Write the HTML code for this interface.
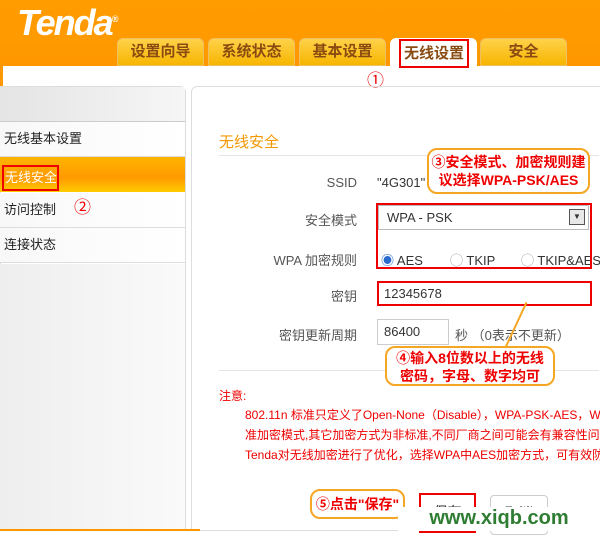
<!DOCTYPE html>
<html><head><meta charset="utf-8"><style>
*{margin:0;padding:0;box-sizing:border-box}
body{width:600px;height:531px;overflow:hidden;position:relative;background:#fff;font-family:"Liberation Sans","Noto Sans CJK SC",sans-serif;font-size:12px;color:#333}
.a{position:absolute}
.hdr{left:0;top:0;width:600px;height:66px;background:linear-gradient(#ff9c00,#ff9800)}
.logo{left:17px;top:3px;font:italic bold 36px/32px "Liberation Sans",sans-serif;color:#fff;letter-spacing:-2px}
.tab{top:38px;height:28px;width:87px;background:linear-gradient(#ffd24a,#f7b500);border-radius:6px 6px 0 0;border:1px solid #f0c060;color:#8a4b12;font-size:15px;text-align:center;line-height:26px;font-weight:bold}
.side{left:0;top:86px;width:186px;height:445px;border:1px solid #ddd;border-radius:0 6px 0 0;background:#fff}
.it{left:0;width:185px;height:35px;border-bottom:1px solid #ddd;font-size:13px;color:#222;line-height:34px;padding-left:4px;background:linear-gradient(90deg,#f8f8f8,#fff)}
.lbl{width:160px;text-align:right;left:197px;font-size:13px;color:#555}
.red{color:#e00;font-size:12px}
.call{border:2px solid #f5a623;border-radius:10px;background:#fff;color:#e00;font-weight:bold;font-size:14px;text-align:center;line-height:18px;white-space:nowrap}
.rb{border:2px solid #e00}
</style></head><body>
<div class="a hdr"></div>
<div class="a logo">Tenda<sup style="font-size:9px">®</sup></div>
<div class="a tab" style="left:117px">设置向导</div>
<div class="a tab" style="left:208px">系统状态</div>
<div class="a tab" style="left:299px">基本设置</div>
<div class="a tab" style="left:390px;background:#fff;border-color:#fff"></div>
<div class="a rb" style="left:399px;top:39px;width:70px;height:29px;color:#8a4b12;font-size:15px;text-align:center;line-height:25px;font-weight:bold">无线设置</div>
<div class="a tab" style="left:480px">安全</div>
<div class="a" style="left:0;top:66px;width:3px;height:465px;background:#ff9800"></div>
<div class="a side"></div>
<div class="a" style="left:0;top:87px;width:185px;height:35px;background:linear-gradient(90deg,#e4e4e4,#f6f6f6);border-bottom:1px solid #ccc"></div>
<div class="a it" style="top:122px">无线基本设置</div>
<div class="a it" style="top:157px;background:linear-gradient(#ffb400,#ff9a00 60%,#ffcc00);color:#fff;border:0"></div>
<div class="a rb" style="left:2px;top:165px;width:57px;height:26px;color:#fff;font-size:13px;line-height:22px;padding-left:1px">无线安全</div>
<div class="a it" style="top:193px">访问控制</div>
<div class="a it" style="top:228px">连接状态</div>
<div class="a" style="left:0;top:264px;width:185px;height:266px;background:linear-gradient(90deg,#eee,#fafafa)"></div>
<div class="a" style="left:74px;top:193px;color:#e00;font-size:17px">②</div>
<div class="a" style="left:367px;top:66px;color:#e00;font-size:17px">①</div>
<div class="a" style="left:191px;top:86px;width:420px;height:445px;border:1px solid #ddd;border-radius:6px 0 0 0"></div>
<div class="a" style="left:219px;top:131px;color:#f39800;font-size:15px">无线安全</div>
<div class="a" style="left:219px;top:155px;width:380px;height:1px;background:#e5e5e5"></div>
<div class="a lbl" style="top:175px">SSID</div>
<div class="a" style="left:377px;top:175px;font-size:13px">"4G301"</div>
<div class="a lbl" style="top:210px">安全模式</div>
<div class="a" style="left:378px;top:205px;width:211px;height:25px;border:1px solid #bbb;font-size:13px;padding:4px 8px">WPA - PSK
<div class="a" style="right:3px;top:3px;width:16px;height:16px;border:1px solid #555;background:#e8e8e8;font-size:8px;text-align:center;line-height:14px">▼</div></div>
<div class="a lbl" style="top:250px">WPA 加密规则</div>
<div class="a" style="left:381px;top:250px;font-size:13px;white-space:nowrap"><span style="color:#2a6ccc">◉</span> AES</div>
<div class="a" style="left:450px;top:250px;font-size:13px;white-space:nowrap"><span style="color:#999">◯</span> TKIP</div>
<div class="a" style="left:521px;top:250px;font-size:13px;white-space:nowrap"><span style="color:#999">◯</span> TKIP&amp;AES</div>
<div class="a rb" style="left:376px;top:203px;width:216px;height:66px"></div>
<div class="a lbl" style="top:286px">密钥</div>
<div class="a rb" style="left:377px;top:281px;width:215px;height:25px;font-size:13px;padding:3px 5px">12345678</div>
<div class="a lbl" style="top:325px">密钥更新周期</div>
<div class="a" style="left:377px;top:319px;width:72px;height:26px;border:1px solid #ccc;font-size:13px;padding:4px 6px">86400</div>
<div class="a" style="left:455px;top:325px;font-size:13px;color:#555">秒 （0表示不更新）</div>
<div class="a" style="left:219px;top:370px;width:380px;height:1px;background:#e5e5e5"></div>
<div class="a red" style="left:219px;top:387px">注意:</div>
<div class="a red" style="left:245px;top:406px;white-space:nowrap">802.11n 标准只定义了Open-None（Disable），WPA-PSK-AES，WPA</div>
<div class="a red" style="left:245px;top:426px;white-space:nowrap">准加密模式,其它加密方式为非标准,不同厂商之间可能会有兼容性问题</div>
<div class="a red" style="left:245px;top:446px;white-space:nowrap">Tenda对无线加密进行了优化，选择WPA中AES加密方式，可有效防</div>
<div class="a call" style="left:427px;top:148px;width:163px;height:46px;padding-top:3px">③安全模式、加密规则建<br>议选择WPA-PSK/AES</div>
<div class="a" style="left:515px;top:300px;width:2px;height:50px;background:#f5a623;transform:rotate(25deg)"></div>
<div class="a call" style="left:385px;top:346px;width:170px;height:40px;padding-top:1px">④输入8位数以上的无线<br>密码，字母、数字均可</div>
<div class="a rb" style="left:419px;top:493px;width:57px;height:40px;font-size:14px;text-align:center;line-height:34px;background:#fff">保存</div>
<div class="a" style="left:490px;top:495px;width:58px;height:40px;border:1px solid #ccc;border-radius:4px;font-size:14px;text-align:center;line-height:34px">取消</div>
<div class="a call" style="left:310px;top:489px;width:95px;height:30px;line-height:26px">⑤点击"保存"</div>
<div class="a" style="left:398px;top:507px;width:202px;height:24px;background:#fff;color:#2e7d32;font:bold 20px/22px 'Liberation Sans',sans-serif;text-align:center;white-space:nowrap">www.xiqb.com</div>
<div class="a" style="left:0;top:529px;width:200px;height:2px;background:#ff9800"></div>
</body></html>
